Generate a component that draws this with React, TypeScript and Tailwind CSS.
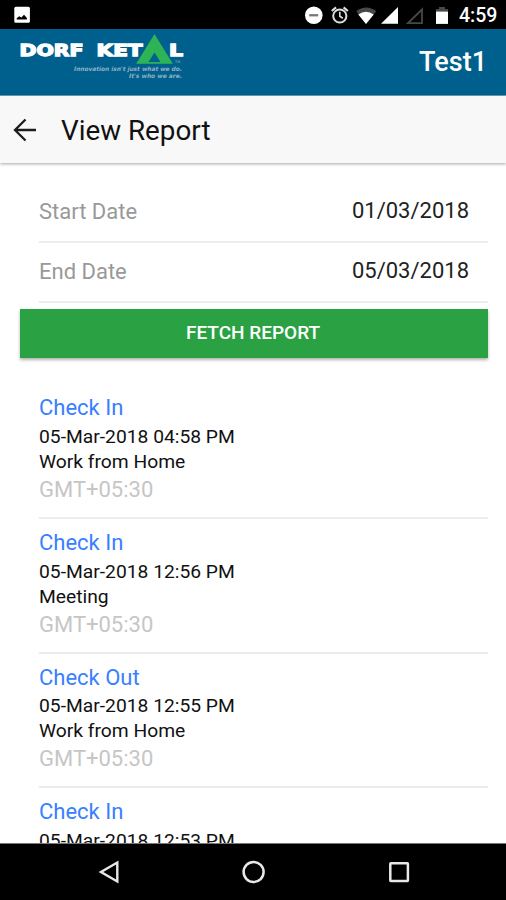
import React from "react";

type Entry = { kind: string; time: string; place?: string; height: string; timeClass: string };

const entries: Entry[] = [
  { kind: "Check In", time: "05-Mar-2018 04:58 PM", place: "Work from Home", height: "h-[135px]", timeClass: "pt-px" },
  { kind: "Check In", time: "05-Mar-2018 12:56 PM", place: "Meeting", height: "h-[135px]", timeClass: "pt-px" },
  { kind: "Check Out", time: "05-Mar-2018 12:55 PM", place: "Work from Home", height: "h-[134px]", timeClass: "pt-0" },
  { kind: "Check In", time: "05-Mar-2018 12:53 PM", height: "h-[135px]", timeClass: "pt-px" },
];

function StatusBar() {
  return (
    <div className="flex h-[29px] shrink-0 items-center justify-between bg-black pr-[8px] pl-[14px]">
      <svg className="h-[17px] w-[17px]" viewBox="0 0 17 17">
        <rect x="0.3" y="0.8" width="15.6" height="16" rx="1.5" fill="#fff" />
        <path d="M2.7 13.4V12.3L5.3 10.3 7.4 11.4 10 8.7 12.9 12V13.4Z" fill="#000" />
      </svg>
      <div className="flex items-center">
        <svg className="h-[20px] w-[150px]" viewBox="0 0 150 20">
          <circle cx="9.8" cy="10.3" r="8.8" fill="#fff" />
          <rect x="5.2" y="9.1" width="9" height="2.3" fill="#777" />
          <g fill="none" stroke="#ddd" strokeWidth="2">
            <circle cx="35.8" cy="11" r="6.6" />
            <path d="M35.8 6.8V11.3L38.8 13.2" strokeWidth="1.6" />
            <path d="M27.8 6 32 2.4M43.8 6 39.6 2.4" strokeWidth="2.2" />
          </g>
          <path d="M52.3 6.2Q62 -1.2 72.3 6.2L62 19Z" fill="#484848" />
          <path d="M54.3 9.4Q62 3.9 69.7 9.4L62 19Z" fill="#fff" />
          <path d="M77 18.8H94V2Z" fill="#fff" />
          <path d="M104 18.1H118V4.5Z" fill="none" stroke="#484848" strokeWidth="1.8" />
          <path d="M135 2H141V4H144V7H132V4H135Z" fill="#484848" />
          <rect x="132" y="6.6" width="12" height="12.3" fill="#fff" />
        </svg>
        <span className="ml-[5px] w-[39px] pt-[2px] text-[19.5px] leading-[28px] font-medium whitespace-nowrap text-white">4:59</span>
      </div>
    </div>
  );
}

function Logo() {
  return (
    <svg className="h-[50px] w-[170px] font-['DejaVu_Sans']" viewBox="18 32 170 50">
      <g fill="#fff" stroke="#fff" strokeWidth="1.3" fontWeight="700" fontSize="16.2">
        <text x="19.5" y="56.2" textLength="64" lengthAdjust="spacingAndGlyphs">DORF</text>
        <text x="96.5" y="56.2" textLength="46" lengthAdjust="spacingAndGlyphs">KET</text>
        <text x="169" y="56.2" textLength="14" lengthAdjust="spacingAndGlyphs">L</text>
      </g>
      <path fillRule="evenodd" d="M154.5 34 172.8 63.8H136.2ZM154.5 52.5 148.5 62H160.5Z" fill="#2eb457" />
      <text x="175" y="62.5" fontSize="3.5" fill="#9dbbcb">TM</text>
      <g fill="#8fb0c2" fontWeight="700" fontStyle="italic" fontSize="6.1">
        <text x="74" y="71.2" textLength="108" lengthAdjust="spacingAndGlyphs">Innovation isn't just what we do.</text>
        <text x="129" y="78.3" textLength="53" lengthAdjust="spacingAndGlyphs">It's who we are.</text>
      </g>
    </svg>
  );
}

function DateRow({ label, value, className }: { label: string; value: string; className: string }) {
  return (
    <div className={"ml-[39px] mr-[18px] flex shrink-0 justify-between border-b-2 border-[#ececec] pr-[19px] text-[22px] leading-[26px] " + className}>
      <span className="pt-px text-[#999]">{label}</span>
      <span className="text-[#222]">{value}</span>
    </div>
  );
}

export default function App() {
  return (
    <div className="flex h-[900px] w-[506px] flex-col overflow-hidden bg-white font-[Roboto,sans-serif]">
      <StatusBar />
      <header className="flex h-[67px] shrink-0 items-start justify-between border-b border-[#6d9fbb] bg-[#00608d] pr-[19px] pl-[18px]">
        <div className="pt-[3px]"><Logo /></div>
        <span className="pt-[17px] text-[27px] leading-[32px] font-medium text-white">Test1</span>
      </header>
      <div className="z-10 flex h-[67px] shrink-0 items-center bg-[#f8f8f8] pl-[13px] shadow-[0_1px_3px_rgba(0,0,0,0.35)]">
        <svg className="h-[24px] w-[24px]" viewBox="0 0 24 24" fill="none" stroke="#1c1c1c" strokeWidth="2.3">
          <path d="M23 12H2M12.5 1.5 2 12 12.5 22.5" />
        </svg>
        <h1 className="ml-[24px] pt-[2px] text-[27.8px] leading-[34px] font-normal text-[#111]">View Report</h1>
      </div>
      <main className="flex min-h-0 flex-1 flex-col overflow-hidden">
        <DateRow label="Start Date" value="01/03/2018" className="h-[80px] pt-[35px]" />
        <DateRow label="End Date" value="05/03/2018" className="h-[60px] pt-[15px]" />
        <button className="mt-[6px] mr-[18px] ml-[20px] h-[49px] shrink-0 bg-[#2aa243] pr-[2px] text-[19px] font-medium text-white shadow-[0_2px_3px_rgba(0,0,0,0.3)]">
          FETCH REPORT
        </button>
        <ul className="mt-[26px] mr-[18px] ml-[39px] min-h-0">
          {entries.map((e) => (
            <li key={e.time} className={"border-b-2 border-[#ececec] pt-[10px] " + e.height}>
              <div className="text-[22px] leading-[28px] text-[#3880ff]">{e.kind}</div>
              <div className={"text-[19.25px] leading-[27px] text-[#111] " + e.timeClass}>{e.time}</div>
              {e.place && (
                <>
                  <div className="text-[19.25px] leading-[24px] text-[#111]">{e.place}</div>
                  <div className="text-[22px] leading-[31px] text-[#c6c6c6]">GMT+05:30</div>
                </>
              )}
            </li>
          ))}
        </ul>
      </main>
      <nav className="flex h-[57px] shrink-0 items-center justify-between border-t border-[#777] bg-black pr-[95px] pl-[98px]">
        <svg className="h-[24px] w-[22px]" viewBox="0 0 22 24" fill="none" stroke="#e8e8e8" strokeWidth="2.4">
          <path d="M19.3 2.5V21.5L3 12Z" />
        </svg>
        <svg className="h-[24px] w-[24px]" viewBox="0 0 24 24" fill="none" stroke="#e8e8e8" strokeWidth="2.5">
          <circle cx="11.6" cy="12" r="10" />
        </svg>
        <svg className="h-[24px] w-[24px]" viewBox="0 0 24 24" fill="none" stroke="#e8e8e8" strokeWidth="2.5">
          <rect x="3.3" y="3.3" width="17.6" height="17.6" rx="0.5" />
        </svg>
      </nav>
    </div>
  );
}
